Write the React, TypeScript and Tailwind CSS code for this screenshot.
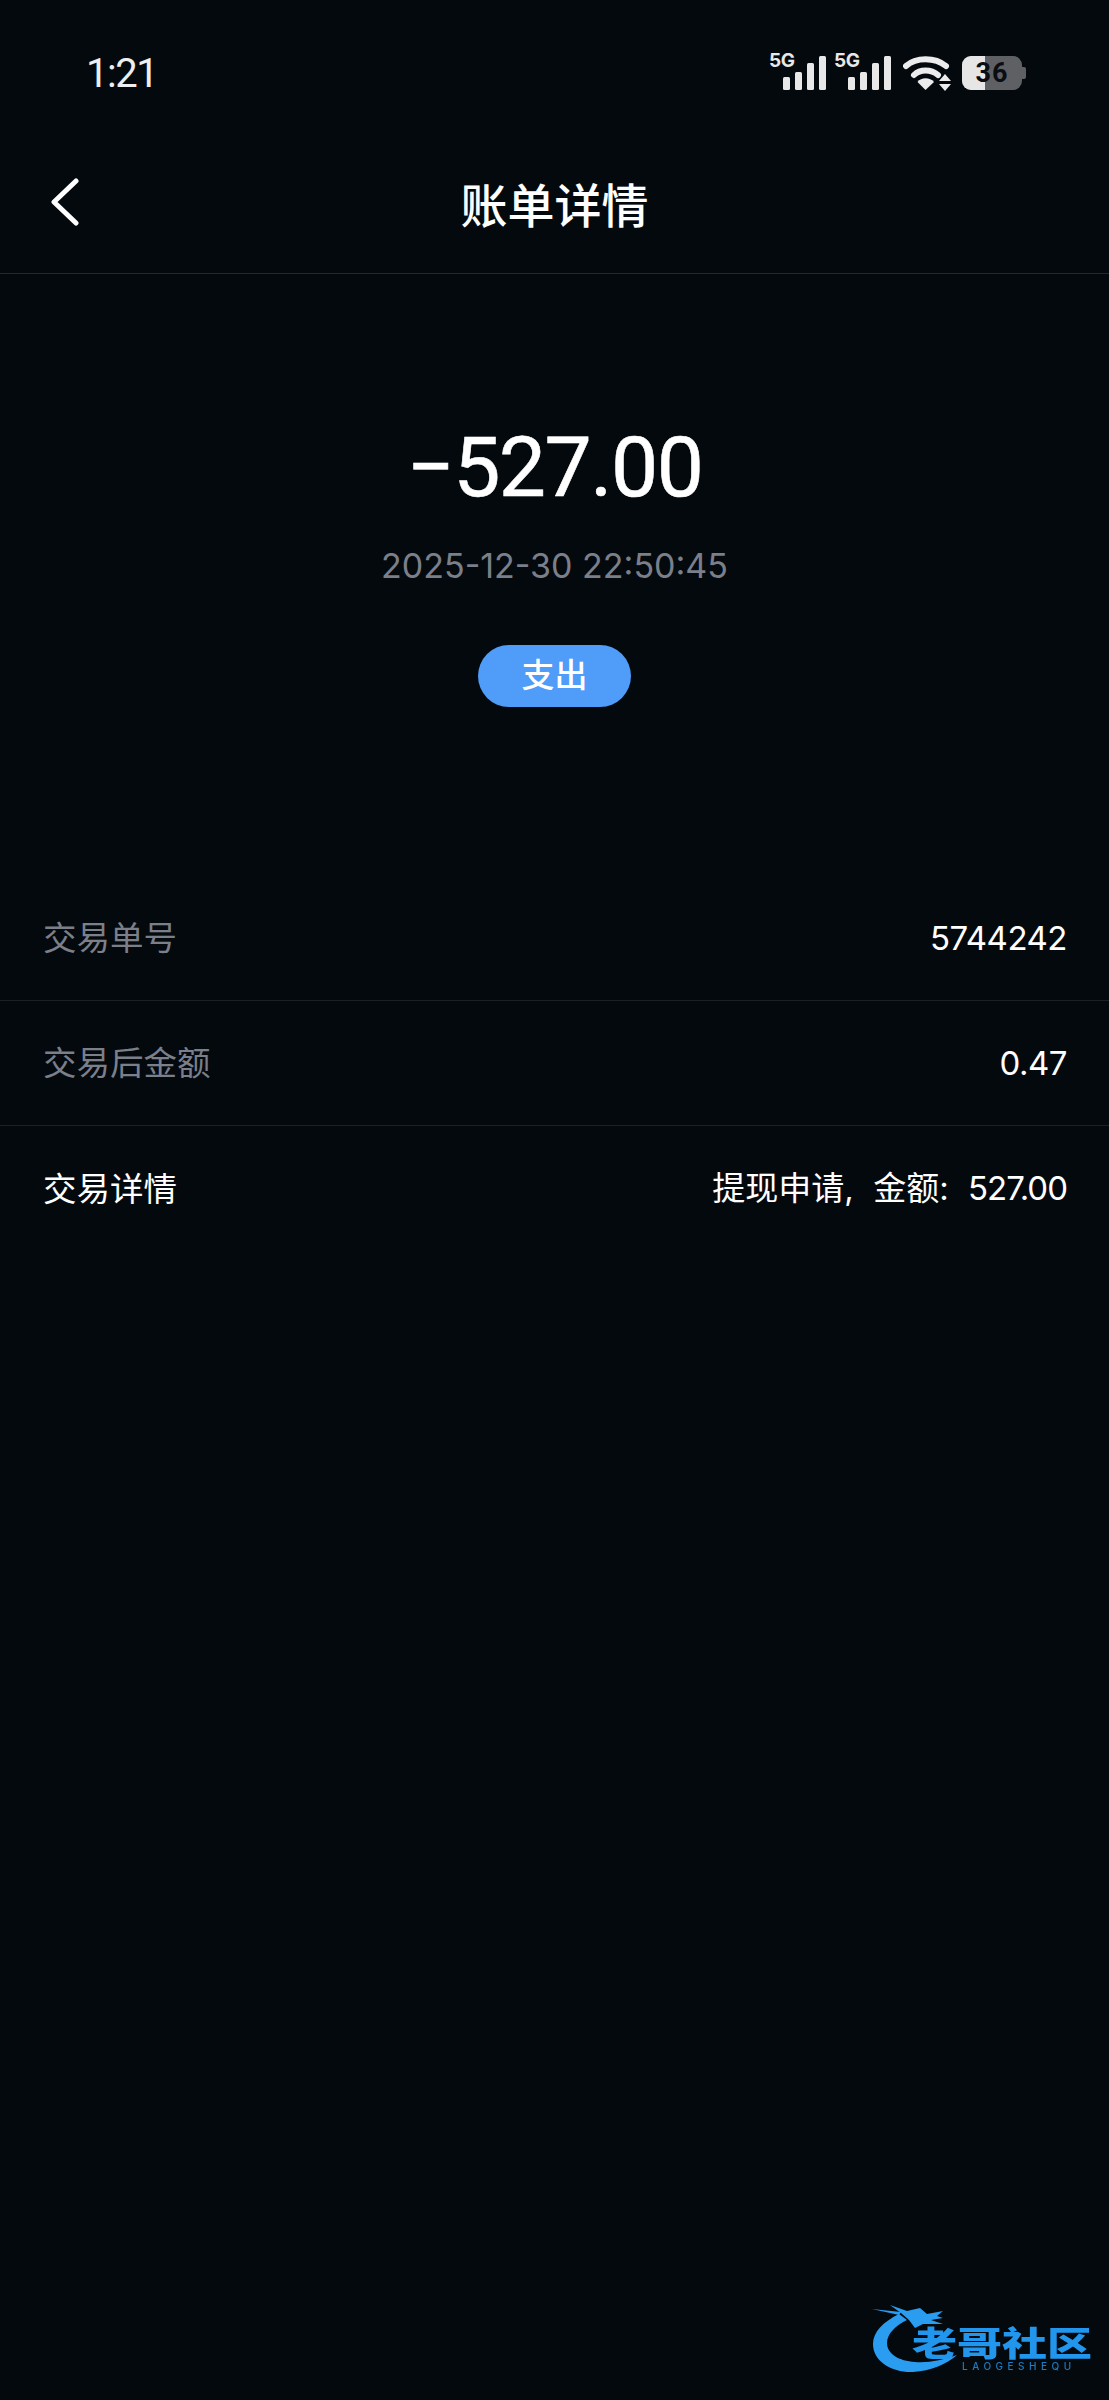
import type { ReactNode } from "react";

function Signal() {
  return (
    <div className="relative h-[38px] w-[58px]">
      <span className="absolute left-[1px] top-[-2px] font-['Inter',sans-serif] text-[19px] font-bold leading-[20px] tracking-[-0.5px] text-[#e8e8e8]">
        5G
      </span>
      <svg className="absolute left-0 top-0" width="58" height="38" viewBox="0 0 58 38" fill="#e8e8e8">
        <rect x="15" y="24" width="7" height="13" rx="1.5" />
        <rect x="27" y="19" width="7" height="18" rx="1.5" />
        <rect x="39" y="10" width="7" height="27" rx="1.5" />
        <rect x="51" y="3" width="7" height="34" rx="1.5" />
      </svg>
    </div>
  );
}

function Wifi() {
  return (
    <svg width="49" height="36" viewBox="0 0 49 36" fill="none">
      <path d="M3 10 C13 1 32 1 43 10" stroke="#ececec" strokeWidth="6" strokeLinecap="round" />
      <path d="M11 19 C17 13 28 13 35 19" stroke="#ececec" strokeWidth="6" strokeLinecap="round" />
      <path d="M14.5 26 C18 21 27 21 31 26 L22.5 34 Z" fill="#ececec" />
      <path d="M42 18 L48 25 L36 25 Z" fill="#ececec" />
      <path d="M36 28 L48 28 L42 35 Z" fill="#ececec" />
    </svg>
  );
}

function Battery() {
  return (
    <div className="flex items-center">
      <div className="relative h-[34px] w-[60px] overflow-hidden rounded-[9px] bg-[#5f6063]">
        <div className="h-full w-[23px] bg-[#e6e6e6]" />
        <span className="absolute inset-0 flex items-center justify-center font-['Roboto',sans-serif] text-[27px] font-bold tracking-[1px] text-[#0a0d12]">
          36
        </span>
      </div>
      <div className="h-[12px] w-[4px] rounded-r-[2px] bg-[#5f6063]" />
    </div>
  );
}

function Row({ label, children, dim, line }: { label: string; children: ReactNode; dim?: boolean; line?: boolean }) {
  return (
    <div className={`flex h-[125px] items-center justify-between pl-[43px] pr-[42px] pt-[1px] text-[33px] ${line ? "border-b border-[#1b2027]" : ""}`}>
      <span className={`text-[33.5px] ${dim ? "text-[#7b7f8a]" : "text-white"}`}>{label}</span>
      <span className="text-white">{children}</span>
    </div>
  );
}

function Logo() {
  return (
    <div className="absolute bottom-0 right-0 h-[100px] w-[244px] blur-[0.5px]">
      <svg className="absolute left-0 top-0" width="100" height="80" viewBox="0 0 100 80" fill="#2a9df0">
        <path d="M34 14 C18 22 8 32 8 44 C8 62 28 73 48 72 C66 71 82 64 92 55 C78 60 64 63 50 62 C34 61 22 54 22 43 C22 34 30 26 42 20 Z" />
        <path d="M36 13 L25 5 L42 11 L55 8 L62 14 L78 11 L72 16 L78 18 L66 20 L78 24 L58 24 L50 28 L44 20 Z" />
        <path d="M7 9 L36 12 L34 15 Z" />
      </svg>
      <span className="absolute left-[47px] top-[24px] origin-center scale-y-75 whitespace-nowrap font-['Noto_Sans_CJK_SC',sans-serif] text-[45px] font-black leading-[36px] text-[#2196ec]">
        老哥社区
      </span>
      <span className="absolute left-[97px] top-[61px] whitespace-nowrap font-['Inter',sans-serif] text-[10px] font-medium leading-[10px] tracking-[4.5px] text-[#1c7cc4]">
        LAOGESHEQU
      </span>
    </div>
  );
}

export default function App() {
  return (
    <div className="relative h-[2400px] w-[1109px] overflow-hidden bg-[#04090e] font-['Inter','Noto_Sans_CJK_SC',sans-serif]">
      <div className="flex h-[110px] items-start justify-between pl-[86px] pr-[83px] pt-[50px]">
        <span className="font-['Roboto',sans-serif] text-[40px] leading-[48px] tracking-[-1.5px] text-[#eceef0]">1:21</span>
        <div className="mt-[3px] flex items-start">
          <Signal />
          <div className="ml-[7px]">
            <Signal />
          </div>
          <div className="ml-[12px] mt-[3px]">
            <Wifi />
          </div>
          <div className="ml-[10px] mt-[3px]">
            <Battery />
          </div>
        </div>
      </div>

      <div className="relative flex h-[164px] items-center justify-center border-b border-[#23272e] pt-[22px]">
        <svg className="absolute left-[49px] top-[68px]" width="32" height="50" viewBox="0 0 32 50" fill="none">
          <path d="M27 3 L5 24 L27 45" stroke="#ffffff" strokeWidth="5" strokeLinecap="round" strokeLinejoin="round" />
        </svg>
        <h1 className="font-['Noto_Sans_CJK_SC',sans-serif] text-[47px] font-medium leading-[60px] text-white">账单详情</h1>
      </div>

      <div className="flex flex-col items-center pt-[144px]">
        <div className="font-['Roboto',sans-serif] text-[84px] leading-[100px] tracking-[-1.5px] text-white [-webkit-text-stroke:0.6px_#ffffff]">−527.00</div>
        <div className="mt-[26px] text-[34px] leading-[44px] text-[#7b7f8a]">2025-12-30 22:50:45</div>
        <div className="mt-[57px] flex h-[62px] w-[153px] items-center justify-center rounded-full bg-[#4f9cf9] text-[33px] font-medium text-white">
          支出
        </div>
      </div>

      <div className="mt-[169px]">
        <Row label="交易单号" dim line>
          <span className="tracking-[-0.5px]">5744242</span>
        </Row>
        <Row label="交易后金额" dim line>
          <span className="tracking-[-0.5px]">0.47</span>
        </Row>
        <Row label="交易详情">
          提现申请<span className="tracking-[5px]">, </span>金额<span className="tracking-[5px]">: </span>
          <span className="tracking-[-1px]">527.00</span>
        </Row>
      </div>

      <Logo />
    </div>
  );
}
